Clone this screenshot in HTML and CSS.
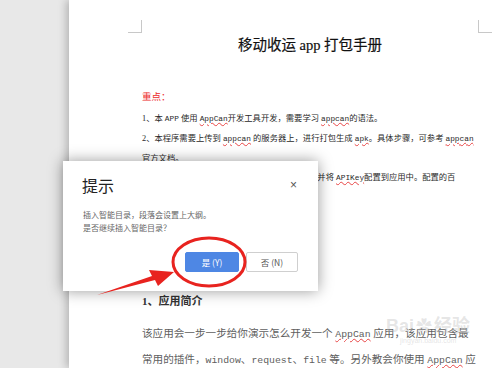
FILE: index.html
```html
<!DOCTYPE html>
<html>
    <head>
        <title>移动收运 app 打包手册</title>
        <link rel="stylesheet" href="styles.css">
    </head>
    <body>
        <div class="desk">
            <div class="gutter"></div>
            <div class="page">
                <div class="marks">
                    <div class="mark mark-left"></div>
                    <div class="mark mark-right"></div>
                </div>
                <div class="content">
                    <h1 class="doc-title">移动收运 app 打包手册</h1>
                    <p class="key">重点：</p>
                    <p class="line">1、本 <span class="mono">APP</span> 使用 <span class="mono typo">AppCan</span>开发工具开发，需要学习 <span class="mono typo">appcan</span>的语法。</p>
                    <p class="line">2、本程序需要上传到 <span class="mono typo">appcan</span> 的服务器上，进行打包生成 <span class="mono typo">apk</span>。具体步骤，可参考 <span class="mono typo">appcan</span></p>
                    <p class="line">官方文档。</p>
                    <p class="line">3、需要到百度地图开放平台申请一个 <span class="mono typo">APIKey</span>，并将 <span class="mono typo">APIKey</span>配置到应用中。配置的百</p>
                    <p class="line">度地图请查看官方文档说明。</p>
                    <h2 class="section">1、应用简介</h2>
                    <p class="body">该应用会一步一步给你演示怎么开发一个 <span class="mono typo">AppCan</span> 应用，该应用包含最</p>
                    <p class="body">常用的插件，<span class="mono">window</span>、<span class="mono">request</span>、<span class="mono">file</span> 等。另外教会你使用 <span class="mono typo">AppCan</span> 应</p>
                </div>
            </div>
        </div>

        <div class="watermark">Bai<span class="paw">✿</span>经验<div class="wm-url">jingyan.baidu.com</div></div>

        <div class="dialog">
            <div class="dialog-head">
                <span class="dialog-title">提示</span>
                <span class="dialog-close">×</span>
            </div>
            <div class="dialog-msg">
                插入智能目录，段落会设置上大纲。<br>
                是否继续插入智能目录？
            </div>
            <div class="dialog-btns">
                <button class="btn btn-yes">是 (Y)</button>
                <button class="btn btn-no">否 (N)</button>
            </div>
        </div>

        <!-- red annotation drawn over the shot -->
        <svg class="notes" width="500" height="368" viewBox="0 0 500 368">
            <ellipse cx="209" cy="262" rx="36" ry="24" fill="none" stroke="#e8231f" stroke-width="3"/>
            <polygon points="97,295 152,276 149,270 174,272 158,286 155,280" fill="#e8231f"/>
        </svg>
    </body>
</html>
```

FILE: styles.css
```css
html, body {
    margin: 0;
    height: 100%;
    overflow: hidden;
}

body {
    background: #e8e8e8;
    font-family: "Liberation Serif", "Noto Sans CJK SC", serif;
    color: #222;
}

.desk {
    display: flex;
    height: 368px;
}

.gutter {
    width: 69px;
    flex: none;
}

.page {
    flex: 1;
    min-width: 0;
    background: #fff;
    box-shadow: -3px 0 8px rgba(0, 0, 0, 0.22);
    padding: 20px 0 0 59px;
    box-sizing: border-box;
}

.marks {
    display: flex;
    justify-content: space-between;
    width: 364px;
    height: 13px;
}

.mark {
    width: 14px;
    height: 13px;
    box-sizing: border-box;
    border-bottom: 1px solid #c8c8c8;
}
.mark-left {
    border-right: 1px solid #c8c8c8;
}
.mark-right {
    border-left: 1px solid #c8c8c8;
}

.content {
    margin-left: 14px;
    width: 336px;
}

.content p, .content h1, .content h2 {
    margin: 0;
    white-space: nowrap;
}

.doc-title {
    margin-top: 3px !important;
    text-align: center;
    font-size: 14.5px;
    line-height: 18px;
    font-weight: normal;
    color: #111;
    -webkit-text-stroke: 0.2px #111;
}

.key {
    margin-top: 34px !important;
    color: #ec2b2b;
    font-size: 9.5px;
    line-height: 19px;
}

.line {
    font-size: 8.3px;
    line-height: 19px;
    color: #2a2a2a;
}
.key + .line {
    margin-top: 1.5px !important;
}

.mono {
    font-family: "Liberation Mono", "Noto Sans CJK SC", monospace;
}
.line .mono {
    font-size: 7.8px;
}
.body .mono {
    font-size: 9.8px;
}

.typo {
    text-decoration: underline wavy #e84545;
    text-decoration-thickness: 0.5px;
    text-underline-offset: 1px;
}

.section {
    margin-top: 86px !important;
    font-size: 11px;
    line-height: 16px;
    font-weight: bold;
    color: #333;
}

.body {
    font-size: 10.6px;
    line-height: 25px;
    color: #606060;
}
.section + .body {
    margin-top: 12.5px !important;
}

.watermark {
    position: absolute;
    left: 386px;
    top: 316px;
    font-family: "Liberation Sans", "Noto Sans CJK SC", sans-serif;
    font-size: 18px;
    font-weight: bold;
    line-height: 20px;
    color: rgba(190, 190, 190, 0.4);
}
.paw {
    font-size: 16px;
    margin: 0 2px;
}
.wm-url {
    font-size: 7px;
    line-height: 8px;
    font-weight: normal;
    padding-left: 14px;
}

.dialog {
    position: absolute;
    left: 63px;
    top: 161px;
    width: 255px;
    height: 130px;
    box-sizing: border-box;
    background: #fff;
    box-shadow: 0 0 14px rgba(0, 0, 0, 0.4);
    font-family: "Noto Sans CJK SC", "Liberation Sans", sans-serif;
    display: flex;
    flex-direction: column;
    padding: 14px 20px 19px 19px;
}

.dialog-head {
    display: flex;
    justify-content: space-between;
    align-items: center;
    height: 20px;
}

.dialog-title {
    font-size: 16px;
    line-height: 20px;
    color: #222;
}

.dialog-close {
    font-family: "Liberation Sans", sans-serif;
    font-size: 12px;
    color: #555;
    margin-right: 1px;
}

.dialog-msg {
    margin-top: 13px;
    padding-left: 1px;
    font-size: 8px;
    line-height: 13px;
    color: #666;
}

.dialog-btns {
    margin-top: auto;
    display: flex;
    justify-content: flex-end;
    gap: 7px;
}

.btn {
    height: 20px;
    padding: 0;
    border-radius: 2px;
    font-family: "Noto Sans CJK SC", "Liberation Sans", sans-serif;
    font-size: 8.5px;
    line-height: 18px;
}

.btn-yes {
    width: 54px;
    background: #4e87e4;
    border: 1px solid #4e87e4;
    color: #fff;
}

.btn-no {
    width: 52px;
    background: #fff;
    border: 1px solid #cfcfcf;
    color: #555;
}

.notes {
    position: absolute;
    left: 0;
    top: 0;
}
```
